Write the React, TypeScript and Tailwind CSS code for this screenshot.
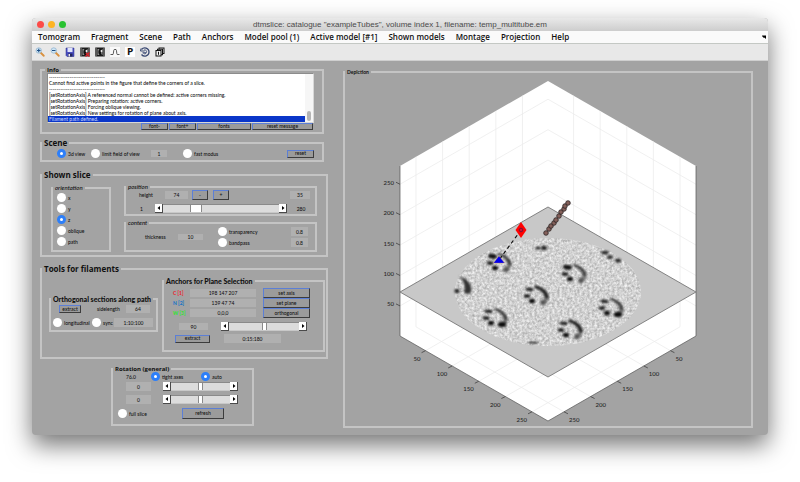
import React, { FC, ReactNode } from "react";
import clsx from "clsx";

const MENUS = [
  "Tomogram",
  "Fragment",
  "Scene",
  "Path",
  "Anchors",
  "Model pool (1)",
  "Active model [#1]",
  "Shown models",
  "Montage",
  "Projection",
  "Help",
];

const MESSAGES = [
  "------------------------------",
  "Cannot find active points in the figure that define the corners of a slice.",
  "------------------------------",
  "[setRotationAxis] A referenced normal cannot be defined: active corners missing.",
  "[setRotationAxis] Preparing rotation: active corners.",
  "[setRotationAxis] Forcing oblique viewing.",
  "[setRotationAxis] New settings for rotation of plane about axis.",
  "Filament path defined.",
];

type PanelProps = {
  title: string;
  className?: string;
  legendClass?: string;
  children: ReactNode;
};

const Panel: FC<PanelProps> = ({ title, className, legendClass, children }) => (
  <fieldset className={clsx("min-w-0 border-2 border-[#c4c4c4]", className)}>
    <legend className={clsx("whitespace-nowrap px-0.5", legendClass)}>
      {title}
    </legend>
    {children}
  </fieldset>
);

const BIG = "font-['Open_Sans',sans-serif] text-[8px] leading-[10px] font-bold";
const MEDIUM = "text-[7px] leading-[8px] font-black";
const SMALL = "font-['Open_Sans',sans-serif] text-[6px] leading-[6px] font-bold";
const ITALIC = "text-[6px] leading-[6px] font-medium italic";

type ButtonProps = { className?: string; children: ReactNode };

const Button: FC<ButtonProps> = ({ className, children }) => (
  <button
    type="button"
    className={clsx(
      "flex shrink-0 items-center justify-center border border-t-[#5c7fd6] border-l-[#5c7fd6] border-r-[#3c3c3c] border-b-[#3c3c3c] bg-[#9b9b9b] leading-[5px] whitespace-nowrap",
      className
    )}
  >
    {children}
  </button>
);

type FieldProps = { label: string; value: string; className?: string };

const Field: FC<FieldProps> = ({ label, value, className }) => (
  <input
    type="text"
    aria-label={label}
    defaultValue={value}
    className={clsx(
      "min-w-0 shrink-0 bg-[#b0b0b0] text-center leading-[6px]",
      className
    )}
  />
);

type OptionProps = {
  label: string;
  group?: string;
  checked?: boolean;
  className?: string;
};

const Option: FC<OptionProps> = ({ label, group, checked, className }) => (
  <label
    className={clsx(
      "flex h-[9px] shrink-0 items-center gap-0.5 whitespace-nowrap",
      className
    )}
  >
    <input
      type="radio"
      name={group ?? label}
      defaultChecked={checked}
      className="size-[9px] shrink-0 appearance-none rounded-full bg-white checked:border-[3px] checked:border-[#2d7ff9]"
    />
    {label}
  </label>
);

type ArrowProps = { label: string; points: string };

const Arrow: FC<ArrowProps> = ({ label, points }) => (
  <button
    type="button"
    aria-label={label}
    className="flex w-2 shrink-0 items-center justify-center border-r border-b border-[#4a4a4a] bg-white"
  >
    <svg viewBox="0 0 4 4" className="size-1">
      <polygon points={points} />
    </svg>
  </button>
);

type SliderProps = {
  label: string;
  value: number;
  wide?: boolean;
  className?: string;
};

const Slider: FC<SliderProps> = ({ label, value, wide, className }) => (
  <div className={clsx("flex h-[9px] min-w-0", className)}>
    <Arrow label={label + " down"} points="3,0 3,4 0.5,2" />
    <input
      type="range"
      aria-label={label}
      defaultValue={value}
      className={clsx(
        "h-[9px] min-w-0 flex-1 appearance-none border-y border-t-[#8a8a8a] border-b-[#c8c8c8] bg-[#dcdcdc] [&::-webkit-slider-thumb]:h-[7px] [&::-webkit-slider-thumb]:appearance-none [&::-webkit-slider-thumb]:border-x [&::-webkit-slider-thumb]:border-[#8a8a8a] [&::-webkit-slider-thumb]:bg-white",
        wide
          ? "[&::-webkit-slider-thumb]:w-3"
          : "[&::-webkit-slider-thumb]:w-[5px]"
      )}
    />
    <Arrow label={label + " up"} points="1,0 1,4 3.5,2" />
  </div>
);

const Magnifier: FC<{ plus?: boolean }> = ({ plus }) => (
  <svg viewBox="0 0 20 20" className="size-full">
    <path d="M11 11 L17.5 17.5" stroke="#d9913f" strokeWidth="3.6" strokeLinecap="round" />
    <circle cx="7.5" cy="7" r="5.4" fill="#cfe6f5" stroke="#93b5cf" strokeWidth="1.6" />
    <path d={plus ? "M4 7 H11 M7.5 3.5 V10.5" : "M4 7 H11"} stroke="#1d4f86" strokeWidth="2.2" />
  </svg>
);

const Film: FC<{ marked?: boolean }> = ({ marked }) => (
  <svg viewBox="0 0 20 20" className="size-full">
    <rect x="0.5" y="1" width="19" height="18" fill="#1c1c1c" />
    <path d="M2.5 3 V17 M17.5 3 V17" stroke="#bdbdbd" strokeWidth="2" strokeDasharray="2 2" />
    <path d="M5 4 H15 V16 H5 Z" fill="#8f8f8f" />
    <path d="M9 4 C6 8 6 12 9 16 H14 C11 12 12 8 14 4 Z" fill="#111" />
    <circle cx="13" cy="8" r="2" fill="#f2f2f2" />
    {marked && <path d="M11 19 L19 11 M12 12 L19 19" stroke="#d3222a" strokeWidth="3" />}
  </svg>
);

const TOOLS: { name: string; icon: ReactNode }[] = [
  { name: "Zoom in", icon: <Magnifier plus /> },
  { name: "Zoom out", icon: <Magnifier /> },
  {
    name: "Save",
    icon: (
      <svg viewBox="0 0 20 20" className="size-full">
        <path d="M2 2 H18 V19 H4 L2 17 Z" fill="#4b4fc0" stroke="#2b2f86" />
        <rect x="5" y="2" width="10" height="8" fill="#dfe4fb" />
        <rect x="6" y="13" width="9" height="6" fill="#23265f" />
        <rect x="7" y="14" width="3" height="5" fill="#e8e8f4" />
      </svg>
    ),
  },
  { name: "Close view", icon: <Film marked /> },
  { name: "Film", icon: <Film /> },
  {
    name: "Profile",
    icon: (
      <svg viewBox="0 0 20 20" className="size-full">
        <rect width="20" height="20" fill="#fafafa" />
        <path d="M1 15 H6 C7 15 7 5 8.5 5 H12 C13.5 5 13 15 14.5 15 H19" fill="none" stroke="#333" strokeWidth="1.6" />
      </svg>
    ),
  },
  {
    name: "Path tool",
    icon: (
      <span className="flex size-full items-center justify-center bg-white text-[9px] leading-[10px] font-extrabold">
        P
      </span>
    ),
  },
  {
    name: "Rotate",
    icon: (
      <svg viewBox="0 0 20 20" className="size-full" fill="none" stroke="#3b4a73">
        <path d="M3 5 C8 -1 18 2 18 10 C18 18 8 21 3 15" strokeWidth="2.6" />
        <path d="M1 8 H9 M2 3 L1 8 M5 11.5 H12" strokeWidth="2" />
        <path d="M8 6 C12 5 14 8 13 11 C12 14 9 14 7 13" strokeWidth="1.8" />
      </svg>
    ),
  },
  {
    name: "Windows",
    icon: (
      <svg viewBox="0 0 20 20" className="size-full" fill="#f4f4f4" stroke="#111" strokeWidth="2">
        <rect x="8" y="2" width="10" height="11" />
        <rect x="5" y="4.5" width="10" height="11" />
        <rect x="2" y="7" width="10" height="11" />
        <path d="M7 9.5 V15.5" />
      </svg>
    ),
  },
];

// Axis box: three faces of a cube seen from above, 280 units a side.
const TICKS = [50, 100, 150, 200, 250];
const along = (tick: number) => ((tick - 2) / 278) * 148;
const rise = (tick: number) => ((tick - 2) / 278) * 85;
const height = (tick: number) => 336 - ((tick - 0.5) / 279.5) * 170;

const Grid: FC = () => (
  <g stroke="#ececec" strokeWidth="0.8" fill="none">
    {TICKS.map((t) => (
      <g key={t}>
        <path d={`M400 ${height(t)} L548 ${height(t) - 85} L696 ${height(t)}`} />
        <path d={`M${548 - along(t)} ${81 + rise(t)} v170 l148 85`} />
        <path d={`M${548 + along(t)} ${81 + rise(t)} v170 l-148 85`} />
      </g>
    ))}
  </g>
);

const AxisLabels: FC = () => (
  <g fill="#262626" stroke="none" fontSize="6">
    {TICKS.map((t) => (
      <g key={t}>
        <text x="394" y={height(t) + 0.5} textAnchor="end">
          {t}
        </text>
        <text x={400 + along(t) - 5} y={336 + rise(t) + 10} textAnchor="end">
          {t}
        </text>
        <text x={696 - along(t) + 5} y={336 + rise(t) + 10}>
          {t}
        </text>
        <path
          d={`M400 ${height(t)} l-4 -2 M${400 + along(t)} ${336 + rise(t)} l-4 2 M${696 - along(t)} ${336 + rise(t)} l4 2`}
          stroke="#333"
          strokeWidth="0.7"
        />
      </g>
    ))}
  </g>
);

type PawProps = { x: number; y: number; heavy: "top" | "low" | "left" };

const Paw: FC<PawProps> = ({ x, y, heavy }) => (
  <g transform={`translate(${x} ${y})`}>
    <path d="M-3 -9 C4 -9 12 -4 13 2 C12.5 6 10 9 6 10 C8 6 9 1 6 -2 C4 -5 1 -7 -3 -9 Z" fill="#555" opacity="0.7" />
    <path d="M0 -8 C6 -6.5 10 -3 11 2" stroke="#1c1c1c" strokeWidth={heavy === "top" ? 3.2 : 1.8} fill="none" strokeLinecap="round" />
    <ellipse cx="7" cy="7.5" rx={heavy === "low" ? 4.2 : 2.8} ry="2.8" fill={heavy === "low" ? "#0c0c0c" : "#555"} />
    <ellipse cx="-7" cy="-5" rx={heavy === "left" ? 4.6 : 4} ry={heavy === "left" ? 2.4 : 1.5} fill="#111" transform="rotate(6)" />
    <ellipse cx="-9" cy="1" rx="3.4" ry="1.8" fill="#111" />
    <ellipse cx="-4" cy="6" rx="3" ry="2.3" fill="#080808" />
  </g>
);

const PAWS: PawProps[] = [
  { x: 499, y: 262, heavy: "left" },
  { x: 495, y: 317, heavy: "low" },
  { x: 536, y: 295, heavy: "top" },
  { x: 574, y: 273, heavy: "left" },
  { x: 611, y: 307, heavy: "low" },
  { x: 570, y: 329, heavy: "top" },
];

const SPOTS = [
  [538, 248, 2.5, 1.6],
  [544, 248, 3, 2.2],
  [605, 252.5, 4, 1.8],
  [610, 257, 3, 1.8],
  [618, 260.5, 3, 2],
  [457, 291, 2.6, 2.2],
  [533, 342.5, 5, 1],
];

const FILAMENT = [
  [546, 233],
  [549, 229],
  [551, 226],
  [554, 223],
  [556, 220],
  [559, 216],
  [561, 212],
  [564, 209],
  [565, 206],
  [568, 203],
];

const Depiction: FC = () => (
  <svg viewBox="345 75 406 351" className="block w-full" role="img" aria-label="Slice in volume">
    <defs>
      <filter id="grain" x="0" y="0" width="1" height="1" colorInterpolationFilters="sRGB">
        <feTurbulence type="fractalNoise" baseFrequency="0.4" numOctaves="2" seed="4" />
        <feColorMatrix values="0.42 0 0 0 0.61  0.42 0 0 0 0.61  0.42 0 0 0 0.61  0 0 0 0 1" />
        <feComposite in2="SourceGraphic" operator="in" />
      </filter>
      <filter id="soft" colorInterpolationFilters="sRGB">
        <feGaussianBlur stdDeviation="0.9" />
      </filter>
    </defs>
    <polygon points="548,81 696,166 696,336 548,421 400,336 400,166" fill="#fff" />
    <Grid />
    <path d="M400 166 V336 L548 421 L696 336 V166" fill="none" stroke="#555" strokeWidth="0.7" />
    <polygon points="400,292 548,207 696,292 548,377" fill="#c8c8c8" stroke="#777" strokeWidth="0.9" />
    <ellipse cx="548" cy="292" rx="93" ry="54" fill="#fff" filter="url(#grain)" />
    <g filter="url(#soft)">
      {PAWS.map((paw) => (
        <Paw key={`${paw.x}-${paw.y}`} {...paw} />
      ))}
      <path d="M459 276 C466 278 473 284 471 292 C469 295 466 294 464 292 C466 286 464 281 459 276 Z" fill="#333" />
      {SPOTS.map(([cx, cy, rx, ry]) => (
        <ellipse key={`${cx}-${cy}`} cx={cx} cy={cy} rx={rx} ry={ry} fill="#222" />
      ))}
    </g>
    <path d="M521 230 L499 260" stroke="#111" strokeWidth="1.2" strokeDasharray="3.5 3" />
    <polygon points="521,222 526.5,230 521,238 515.5,230" fill="#f00" />
    <circle cx="521" cy="230" r="1.8" fill="#d11030" stroke="#5a1440" strokeWidth="0.8" />
    <polygon points="499,256 504.5,263 493.5,263" fill="#0000f0" stroke="#e0884a" strokeWidth="0.3" />
    <g fill="#84605a" stroke="#2b2222" strokeWidth="0.8">
      {FILAMENT.map(([cx, cy]) => (
        <circle key={cx} cx={cx} cy={cy} r="2.3" />
      ))}
    </g>
    <AxisLabels />
  </svg>
);

const ANCHORS = [
  { name: "C [1]", value: "198 147 207", action: "set axis", color: "text-[#f0202a]" },
  { name: "N [2]", value: "139 47 74", action: "set plane", color: "text-[#0f70c8]" },
  { name: "W [3]", value: "0,0,0", action: "orthogonal", color: "text-[#2be82b]" },
];

const InfoPanel: FC = () => (
  <Panel title="Info" className="mr-1 px-[5px] pb-0.5" legendClass={clsx("-ml-0.5", SMALL)}>
    <div className="mr-[3px] flex border border-[#8c8c8c] border-r-[#d8d8d8] border-b-[#d8d8d8] bg-white">
      <ul className="min-w-0 flex-1 leading-[6px] whitespace-nowrap">
        {MESSAGES.map((message, i) => (
          <li
            key={i}
            className={clsx(
              "px-px",
              i === MESSAGES.length - 1 && "bg-[#0a36c9] text-[#c4d2ff]"
            )}
          >
            {message}
          </li>
        ))}
      </ul>
      <div className="flex w-2 flex-col items-center justify-end bg-[#f6f6f6] pb-px">
        <div className="h-2.5 w-1 rounded-full bg-[#b4b4b4]" />
      </div>
    </div>
    <div className="mr-1 flex justify-end gap-px">
      <Button className="h-[7px] w-[27px]">font-</Button>
      <Button className="h-[7px] w-[27px]">font+</Button>
      <Button className="h-[7px] w-[54px]">fonts</Button>
      <Button className="h-[7px] w-[61px]">reset message</Button>
    </div>
  </Panel>
);

const ScenePanel: FC = () => (
  <Panel title="Scene" className="mt-1 mr-1 pb-0.5" legendClass={BIG}>
    <div className="mt-px flex items-center pr-2 pl-[15px]">
      <Option label="3d view" group="scene" checked className="w-[34px]" />
      <Option label="limit field of view" group="scene" className="w-[60px]" />
      <Field label="field of view" value="1" className="h-[7px] w-4" />
      <Option label="fast modus" group="scene" className="ml-4" />
      <Button className="ml-auto h-2 w-[27px]">reset</Button>
    </div>
  </Panel>
);

const SlicePanel: FC = () => (
  <Panel title="Shown slice" className="mt-2 px-[9px] pb-[3px]" legendClass={clsx("-ml-[9px]", BIG)}>
    <div className="flex gap-[13px] pt-1">
      <Panel title="orientation" className="mt-px w-[60px] shrink-0" legendClass={ITALIC}>
        <div className="flex flex-col gap-0.5 pt-0.5 pb-1 pl-1">
          {["x", "y", "z", "oblique", "path"].map((axis) => (
            <Option key={axis} label={axis} group="orientation" checked={axis === "z"} />
          ))}
        </div>
      </Panel>
      <div className="flex min-w-0 flex-1 flex-col gap-1">
        <Panel title="position" className="pb-px" legendClass={ITALIC}>
          <div className="flex h-2.5 items-center pr-[5px] pl-[13px]">
            <span className="w-[26px]">height</span>
            <Field label="height" value="74" className="h-2 w-[23px]" />
            <Button className="ml-1 h-2.5 w-4">-</Button>
            <Button className="ml-[5px] h-2.5 w-4">+</Button>
            <Field label="step" value="35" className="ml-auto h-2 w-5" />
          </div>
          <div className="mt-1 flex items-center pl-[14px]">
            <span className="w-[15px]">1</span>
            <Slider label="slice" value={26} wide className="flex-1" />
            <span className="w-7 text-center">280</span>
          </div>
        </Panel>
        <Panel title="content" className="pt-px pb-[3px]" legendClass={ITALIC}>
          <div className="flex items-center pr-[7px] pl-[19px]">
            <label htmlFor="thickness" className="w-[33px]">
              thickness
            </label>
            <input
              id="thickness"
              defaultValue="10"
              className="h-[6px] w-[25px] bg-[#b0b0b0] text-center leading-[6px]"
            />
            <div className="ml-[15px] flex flex-1 flex-col gap-0.5">
              {["transparency", "bandpass"].map((name) => (
                <div key={name} className="flex items-center justify-between">
                  <Option label={name} group="content" />
                  <Field label={name + " value"} value="0.8" className="h-[9px] w-[17px]" />
                </div>
              ))}
            </div>
          </div>
        </Panel>
      </div>
    </div>
  </Panel>
);

const FilamentPanel: FC = () => (
  <Panel title="Tools for filaments" className="mt-[7px] pr-px pb-[5px] pl-[7px]" legendClass={clsx("-ml-[7px]", BIG)}>
    <div className="flex items-start gap-1 pt-[3px]">
      <Panel title="Orthogonal sections along path" className="mt-[18px] w-[109px] shrink-0 pb-[3px]" legendClass={MEDIUM}>
        <div className="flex items-center pt-0.5 pl-2">
          <Button className="h-2 w-[22px]">extract</Button>
          <label htmlFor="sidelength" className="ml-4 w-[29px]">
            sidelength
          </label>
          <input
            id="sidelength"
            defaultValue="64"
            className="h-2 w-6 bg-[#b0b0b0] text-center leading-[6px]"
          />
        </div>
        <div className="mt-[5px] flex items-center pl-0.5">
          <Option label="longitudinal" className="w-[39px]" />
          <Option label="sync" className="w-[22px]" />
          <Field label="range" value="1:10:100" className="h-[9px] w-[39px]" />
        </div>
      </Panel>
      <Panel title="Anchors for Plane Selection" className="min-w-0 flex-1 pt-[3px] pb-[7px]" legendClass={MEDIUM}>
        {ANCHORS.map(({ name, value, action, color }) => (
          <div key={name} className="flex h-2.5 items-center pl-[9px]">
            <span className={clsx("w-[17px] font-bold", color)}>{name}</span>
            <Field label={name} value={value} className="h-2 w-[66px]" />
            <Button className="ml-[7px] h-2.5 w-[47px]">{action}</Button>
          </div>
        ))}
        <div className="mt-1 flex items-center pl-[15px]">
          <Field label="angle" value="90" className="h-[7px] w-[29px]" />
          <Slider label="angle slider" value={50} className="ml-[13px] w-[86px]" />
        </div>
        <div className="mt-[3px] flex items-center pl-[11px]">
          <Button className="h-2 w-[35px]">extract</Button>
          <Field label="angle range" value="0:15:180" className="ml-3.5 h-[9px] w-[57px]" />
        </div>
      </Panel>
    </div>
  </Panel>
);

const RotationPanel: FC = () => (
  <Panel title="Rotation (general)" className="mt-[7px] ml-[71px] w-[143px] pb-[5px]" legendClass={SMALL}>
    <div className="flex items-center pl-[13px]">
      <span className="w-[25px]">76.0</span>
      <Option label="tight axes" checked className="w-[50px]" />
      <Option label="auto" checked />
    </div>
    <div className="mt-px flex items-center gap-3 pl-[13px]">
      <Field label="tilt" value="0" className="h-[9px] w-[25px]" />
      <Slider label="tilt slider" value={50} className="w-[75px]" />
    </div>
    <div className="mt-1 flex items-center gap-3 pl-[13px]">
      <Field label="turn" value="0" className="h-[9px] w-[25px]" />
      <Slider label="turn slider" value={50} className="w-[75px]" />
    </div>
    <div className="mt-1 flex items-center pl-[5px]">
      <Option label="full slice" className="w-16" />
      <Button className="h-[11px] w-[42px]">refresh</Button>
    </div>
  </Panel>
);

const App: FC = () => (
  <div className="bg-white px-8 pt-[18px] pb-[47px]">
    <main className="overflow-hidden rounded-[4px] bg-[#a3a3a3] font-['Lato','Open_Sans',sans-serif] text-[5px] leading-[6px] font-medium text-[#101010] shadow-[0_10px_24px_rgba(0,0,0,0.55)]">
      <header className="flex h-[13px] items-center bg-linear-to-b from-[#e9e9e9] to-[#cdcdcd] px-[5px] font-['Liberation_Sans',Arial,sans-serif] text-[8px] leading-[10px] font-normal text-[#4a4a4a]">
        <div className="flex w-[60px] gap-1">
          <button type="button" aria-label="Close" className="size-[7px] rounded-full bg-[#fc4b48]" />
          <button type="button" aria-label="Minimise" className="size-[7px] rounded-full bg-[#fdb424]" />
          <button type="button" aria-label="Zoom window" className="size-[7px] rounded-full bg-[#29c231]" />
        </div>
        <h1 className="flex-1 pt-px pr-[60px] text-center">
          dtmslice: catalogue "exampleTubes", volume index 1, filename:
          temp_multitube.em
        </h1>
      </header>
      <nav className="flex h-[13px] items-center gap-[11px] border-b border-[#c4c8c4] bg-[#fafafa] px-1.5 font-['Open_Sans',sans-serif] text-[8px] leading-[10px] font-semibold whitespace-nowrap">
        {MENUS.map((menu) => (
          <button key={menu} type="button">
            {menu}
          </button>
        ))}
        <svg viewBox="0 0 8 8" className="-mr-1 ml-auto size-1">
          <path d="M0 1 H8 V8 L5.5 5.5 C4 6 1 5 0 1 Z" />
        </svg>
      </nav>
      <div className="flex h-4 items-center gap-[5px] bg-[#e8e8e8] px-[3px]">
        {TOOLS.map(({ name, icon }) => (
          <button key={name} type="button" aria-label={name} className="size-2.5">
            {icon}
          </button>
        ))}
      </div>
      <div className="grid grid-cols-[288fr_410fr] items-start gap-[15px] border-t border-[#cfcfcf] pr-[15px] pb-[7px] pl-2">
        <div className="min-w-0 pt-1.5">
          <InfoPanel />
          <ScenePanel />
          <SlicePanel />
          <FilamentPanel />
          <RotationPanel />
        </div>
        <Panel title="Depiction" className="mt-2" legendClass="text-[5px] leading-[6px] font-bold">
          <Depiction />
        </Panel>
      </div>
    </main>
  </div>
);

export default App;
